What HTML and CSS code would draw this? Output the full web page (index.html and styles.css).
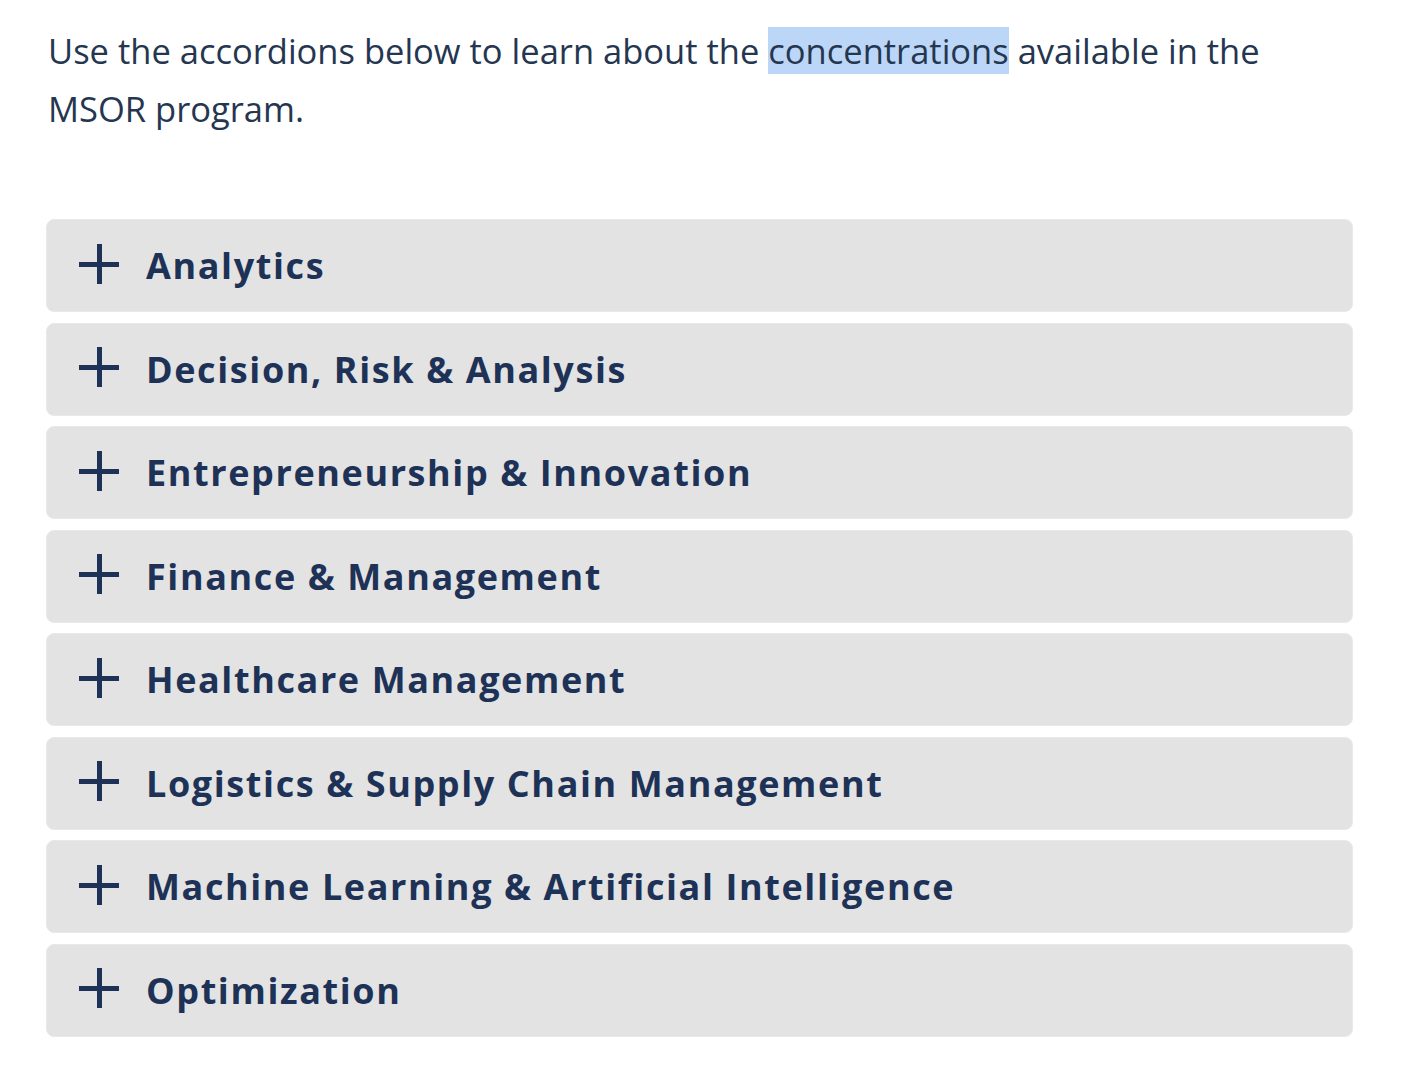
FILE: index.html
```html
<!DOCTYPE html>
<html lang="en">
<head>
    <meta charset="UTF-8">
    <meta name="viewport" content="width=device-width, initial-scale=1.0">
    <title>MSOR Concentrations</title>
    <link rel="stylesheet" href="styles.css">
</head>
<body>
    <p class="intro">Use the accordions below to learn about the <span class="picked">concentrations</span> available in the MSOR program.</p>

    <div class="accordion">
        <button class="acc-item"><span class="plus"></span><span class="acc-title">Analytics</span></button>
        <button class="acc-item"><span class="plus"></span><span class="acc-title">Decision, Risk &amp; Analysis</span></button>
        <button class="acc-item"><span class="plus"></span><span class="acc-title">Entrepreneurship &amp; Innovation</span></button>
        <button class="acc-item"><span class="plus"></span><span class="acc-title">Finance &amp; Management</span></button>
        <button class="acc-item"><span class="plus"></span><span class="acc-title">Healthcare Management</span></button>
        <button class="acc-item"><span class="plus"></span><span class="acc-title">Logistics &amp; Supply Chain Management</span></button>
        <button class="acc-item"><span class="plus"></span><span class="acc-title">Machine Learning &amp; Artificial Intelligence</span></button>
        <button class="acc-item"><span class="plus"></span><span class="acc-title">Optimization</span></button>
    </div>
</body>
</html>
```

FILE: styles.css
```css
body {
    margin: 0;
    padding: 22px 54px 40px 46px;
    background-color: #fff;
    color: #253650;
    font-family: 'Open Sans', 'Noto Sans', sans-serif;
}
.intro {
    margin: 0 0 81px 2px;
    font-size: 34.5px;
    line-height: 58px;
    max-width: 1250px;
}
.picked {
    background-color: #bcd6f7;
}
.accordion {
    display: flex;
    flex-direction: column;
    gap: 10.5px;
}
.acc-item {
    display: flex;
    align-items: center;
    gap: 27px;
    height: 93px;
    padding: 0 0 0 32px;
    background-color: #e3e3e3;
    border: 1px solid #e9e9e9;
    border-radius: 8px;
    font-family: inherit;
    text-align: left;
    cursor: pointer;
}
.plus {
    position: relative;
    width: 40px;
    height: 40px;
    flex-shrink: 0;
    margin-top: -4px;
}
.plus::before,
.plus::after {
    content: "";
    position: absolute;
    background-color: #1d3256;
}
.plus::before {
    left: 0;
    top: 18px;
    width: 40px;
    height: 5px;
}
.plus::after {
    left: 18px;
    top: 0;
    width: 5px;
    height: 40px;
}
.acc-title {
    font-size: 36px;
    font-weight: 700;
    letter-spacing: 1.6px;
    color: #1d3256;
}
```
